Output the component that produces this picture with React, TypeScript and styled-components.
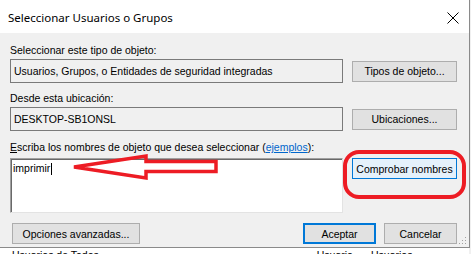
import React from 'react';
import styled, { createGlobalStyle } from 'styled-components';

const GlobalStyle = createGlobalStyle`
  html, body {
    margin: 0;
    padding: 0;
    background: #f0f0f0;
  }
  body {
    width: 471px;
    height: 254px;
    overflow: hidden;
    font-family: "Liberation Sans", Arial, sans-serif;
  }
`;

const Page = styled.div`
  width: 471px;
  height: 254px;
  display: flex;
  flex-direction: column;
  overflow: hidden;
`;

const Dialog = styled.div`
  width: 469px;
  height: 247px;
  display: flex;
  flex-direction: column;
  background: #f0f0f0;
  border-right: 1px solid #8a8a8a;
  border-bottom: 1px solid #8a8a8a;
  position: relative;
`;

const TitleBar = styled.div`
  height: 33px;
  flex: none;
  background: #ffffff;
  display: flex;
  align-items: center;
  justify-content: space-between;
  padding: 0 10px 0 8px;
`;

const Title = styled.span`
  font-family: "Noto Sans", "Liberation Sans", sans-serif;
  font-size: 11.5px;
  color: #000;
  margin-top: 1px;
`;

const CloseIcon = styled.svg`
  width: 12px;
  height: 12px;
  margin-top: 2px;
`;

const Body = styled.div`
  padding: 11px 12px 0 10px;
  display: grid;
  grid-template-columns: 333px 105px;
  column-gap: 9px;
  font-size: 10.5px;
  color: #000;
`;

const Label = styled.div<{ $top: number }>`
  grid-column: 1 / span 2;
  height: 13px;
  line-height: 13px;
  margin-top: ${(p) => p.$top}px;
  white-space: nowrap;
`;

const ReadOnlyBox = styled.div`
  height: 24px;
  box-sizing: border-box;
  margin-top: 2px;
  border: 1px solid #7a7a7a;
  background: #f0f0f0;
  padding-left: 3px;
  display: flex;
  align-items: center;
  white-space: nowrap;
`;

const Button = styled.div<{ $width?: number; $focus?: 'soft' | 'strong' }>`
  box-sizing: border-box;
  height: 21px;
  width: ${(p) => (p.$width ? `${p.$width}px` : 'auto')};
  border: ${(p) => (p.$focus === 'strong' ? '2px solid #0078d7' : p.$focus === 'soft' ? '1px solid #0078d7' : '1px solid #adadad')};
  background: ${(p) => (p.$focus === 'soft' ? '#e5f1fb' : '#e1e1e1')};
  display: flex;
  align-items: center;
  justify-content: center;
  white-space: nowrap;
  font-size: 10.5px;
  color: #000;
`;

const SideButton = styled(Button)`
  align-self: center;
  margin-top: 2px;
`;

const InputArea = styled.div`
  position: relative;
  height: 55px;
  margin-top: 4px;
  box-sizing: border-box;
  background: #ffffff;
  border-top: 1px solid #a0a0a0;
  border-left: 1px solid #a0a0a0;
  border-right: 1px solid #e3e3e3;
  border-bottom: 1px solid #e3e3e3;
  box-shadow: inset 1px 1px 0 #696969;
  padding: 3px 0 0 2px;
  line-height: 13px;
`;

const Typed = styled.span`
  display: inline-flex;
  align-items: center;
`;

const Caret = styled.span`
  display: inline-block;
  width: 1px;
  height: 12px;
  background: #000;
  margin-left: 1px;
`;

const CheckButton = styled(Button)`
  align-self: start;
  margin-top: 4px;
  position: relative;
`;

const Underline = styled.span`
  text-decoration: underline;
`;

const Link = styled.span`
  color: #0066cc;
  text-decoration: underline;
`;

const Footer = styled.div`
  grid-column: 1 / span 2;
  display: flex;
  align-items: center;
  margin-top: 10px;
  padding-left: 2px;
  gap: 8px;
`;

const Spacer = styled.div`
  flex: 1;
`;

const Grip = styled.svg`
  position: absolute;
  right: 2px;
  bottom: 2px;
  width: 10px;
  height: 10px;
`;

const Annotation = styled.svg`
  position: absolute;
  pointer-events: none;
  overflow: visible;
`;

const Behind = styled.div`
  flex: 1;
  display: flex;
  background: #ffffff;
  overflow: hidden;
  font-size: 10.5px;
  color: #000;
  line-height: 13px;
  padding-top: 1px;
  width: 469px;
`;

const BehindCell = styled.span<{ $left: number }>`
  margin-left: ${(p) => p.$left}px;
  white-space: nowrap;
`;

export default function App() {
  return (
    <>
      <GlobalStyle />
      <Page>
        <Dialog>
          <TitleBar>
            <Title>Seleccionar Usuarios o Grupos</Title>
            <CloseIcon viewBox="0 0 12 12">
              <path d="M0.5 0.5 L11.5 11.5 M11.5 0.5 L0.5 11.5" stroke="#000" strokeWidth="1" />
            </CloseIcon>
          </TitleBar>
          <Body>
            <Label $top={0}>Seleccionar este tipo de objeto:</Label>
            <ReadOnlyBox>Usuarios, Grupos, o Entidades de seguridad integradas</ReadOnlyBox>
            <SideButton $width={105}>Tipos de objeto...</SideButton>

            <Label $top={9}>Desde esta ubicación:</Label>
            <ReadOnlyBox>DESKTOP-SB1ONSL</ReadOnlyBox>
            <SideButton $width={105}>Ubicaciones...</SideButton>

            <Label $top={10}>
              <Underline>E</Underline>scriba los nombres de objeto que desea seleccionar (<Link>ejemplos</Link>):
            </Label>
            <InputArea>
              <Typed>
                imprimir
                <Caret />
              </Typed>
              <Annotation width="150" height="30" viewBox="0 0 150 30" style={{ left: 60, top: -4 }}>
                <path
                  d="M3 12 L75 1 L75 6.5 L145 6.5 L145 16.5 L75 16.5 L75 23 Z"
                  fill="none"
                  stroke="#ed1c24"
                  strokeWidth="3.5"
                  strokeLinejoin="miter"
                />
              </Annotation>
            </InputArea>
            <CheckButton $width={105} $focus="soft">
              Comprobar nombres
              <Annotation width="125" height="50" viewBox="0 0 125 50" style={{ left: -10, top: -9 }}>
                <rect x="2" y="2" width="119" height="45" rx="14" ry="14" fill="none" stroke="#ed1c24" strokeWidth="4" />
              </Annotation>
            </CheckButton>

            <Footer>
              <Button $width={128}>Opciones avanzadas...</Button>
              <Spacer />
              <Button $width={73} $focus="strong">Aceptar</Button>
              <Button $width={73}>Cancelar</Button>
            </Footer>
          </Body>
          <Grip viewBox="0 0 10 10">
            <rect x="8" y="2" width="1" height="1" fill="#a0a0a0" />
            <rect x="5" y="5" width="1" height="1" fill="#a0a0a0" />
            <rect x="8" y="5" width="1" height="1" fill="#a0a0a0" />
            <rect x="2" y="8" width="1" height="1" fill="#a0a0a0" />
            <rect x="5" y="8" width="1" height="1" fill="#a0a0a0" />
            <rect x="8" y="8" width="1" height="1" fill="#a0a0a0" />
          </Grip>
        </Dialog>
        <Behind>
          <BehindCell $left={12}>Usuarios de Todos</BehindCell>
          <BehindCell $left={218}>Usuario</BehindCell>
          <BehindCell $left={18}>Usuarios</BehindCell>
        </Behind>
      </Page>
    </>
  );
}
